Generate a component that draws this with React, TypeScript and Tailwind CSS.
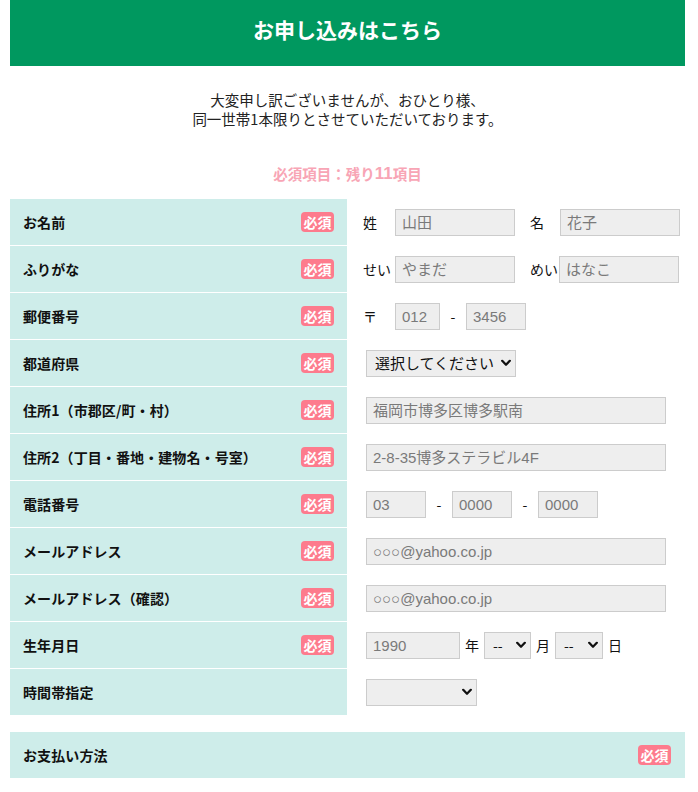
import React from "react";

const JP = '"Noto Sans CJK JP", sans-serif';
const LAT = '"Liberation Sans", "Noto Sans CJK JP", sans-serif';

function Badge() {
  return (
    <span className="inline-flex h-[20px] w-[33px] items-center justify-center rounded-[4px] bg-[#fd7b8d] text-[14px] font-bold leading-none text-white">
      必須
    </span>
  );
}

function Chevron() {
  return (
    <svg width="10" height="7" viewBox="0 0 10 7" className="pointer-events-none absolute right-[5px] top-1/2 -translate-y-1/2">
      <path d="M1.2 1.3 L5 5.2 L8.8 1.3" fill="none" stroke="#111" strokeWidth="2.3" strokeLinecap="round" strokeLinejoin="round" />
    </svg>
  );
}

function Sel({ w, text, pl = "pl-[8px]", size = "text-[15px]" }: { w: string; text: string; pl?: string; size?: string }) {
  return (
    <div className={`relative h-[27px] ${w}`}>
      <select
        className={`h-full w-full appearance-none rounded-none border border-[#cccccc] bg-[#eeeeee] ${pl} ${size} text-[#111] outline-none`}
        style={{ fontFamily: JP }}
        defaultValue=""
      >
        <option value="">{text}</option>
      </select>
      <Chevron />
    </div>
  );
}

function Inp({ w, ph }: { w: string; ph: string }) {
  return (
    <input
      className={`h-[27px] ${w} border border-[#cccccc] bg-[#eeeeee] px-[6px] text-[15px] text-[#333] outline-none placeholder:text-[#7a7a7a]`}
      style={{ fontFamily: LAT }}
      placeholder={ph}
    />
  );
}

function Row({ label, req = true, children }: { label: string; req?: boolean; children?: React.ReactNode }) {
  return (
    <div className="flex border-b border-white">
      <div className="flex h-[46px] w-[337px] items-center justify-between bg-[#ceedea] pl-[13px] pr-[13px]">
        <span className="text-[14px] font-bold tracking-[0.1px] text-[#111]">{label}</span>
        {req && <Badge />}
      </div>
      <div className="flex flex-1 items-center text-[14px] text-[#111]">{children}</div>
    </div>
  );
}

export default function App() {
  return (
    <div className="min-h-[792px] bg-white" style={{ fontFamily: JP }}>
      <div className="ml-[10px] w-[675px]">
        <div className="flex h-[66px] items-center justify-center bg-[#00985f] pb-[6px]">
          <h1 className="text-[21px] font-bold text-white">お申し込みはこちら</h1>
        </div>
        <div className="pt-[24px] text-center text-[14.5px] leading-[19px] text-[#222]">
          <p>大変申し訳ございませんが、おひとり様、</p>
          <p>同一世帯1本限りとさせていただいております。</p>
        </div>
        <div className="mt-[36px] flex h-[20px] items-center justify-center text-[14.5px] font-bold text-[#f8a5b5]">
          <span>必須項目：残り</span>
          <span className="text-[17px]" style={{ fontFamily: LAT }}>11</span>
          <span>項目</span>
        </div>
        <div className="mt-[15px]">
          <Row label="お名前">
            <div className="flex items-center pl-[16px]">
              <span className="w-[32px]">姓</span>
              <Inp w="w-[120px]" ph="山田" />
              <span className="ml-[15px] w-[30px]">名</span>
              <Inp w="w-[120px]" ph="花子" />
            </div>
          </Row>
          <Row label="ふりがな">
            <div className="flex items-center pl-[16px]">
              <span className="w-[32px]">せい</span>
              <Inp w="w-[120px]" ph="やまだ" />
              <span className="ml-[15px] w-[29px]">めい</span>
              <Inp w="w-[120px]" ph="はなこ" />
            </div>
          </Row>
          <Row label="郵便番号">
            <div className="flex items-center pl-[16px]">
              <span className="w-[32px]">〒</span>
              <Inp w="w-[45px]" ph="012" />
              <span className="w-[26px] text-center">-</span>
              <Inp w="w-[60px]" ph="3456" />
            </div>
          </Row>
          <Row label="都道府県">
            <div className="pl-[19px]">
              <Sel w="w-[150px]" text="選択してください" pl="pl-[8px]" size="text-[15px]" />
            </div>
          </Row>
          <Row label="住所1（市郡区/町・村）">
            <div className="pl-[19px]">
              <Inp w="w-[300px]" ph="福岡市博多区博多駅南" />
            </div>
          </Row>
          <Row label="住所2（丁目・番地・建物名・号室）">
            <div className="pl-[19px]">
              <Inp w="w-[300px]" ph="2-8-35博多ステラビル4F" />
            </div>
          </Row>
          <Row label="電話番号">
            <div className="flex items-center pl-[19px]">
              <Inp w="w-[60px]" ph="03" />
              <span className="w-[26px] text-center">-</span>
              <Inp w="w-[60px]" ph="0000" />
              <span className="w-[26px] text-center">-</span>
              <Inp w="w-[60px]" ph="0000" />
            </div>
          </Row>
          <Row label="メールアドレス">
            <div className="pl-[19px]">
              <Inp w="w-[300px]" ph="○○○@yahoo.co.jp" />
            </div>
          </Row>
          <Row label="メールアドレス（確認）">
            <div className="pl-[19px]">
              <Inp w="w-[300px]" ph="○○○@yahoo.co.jp" />
            </div>
          </Row>
          <Row label="生年月日">
            <div className="flex items-center pl-[19px]">
              <Inp w="w-[94px]" ph="1990" />
              <span className="px-[5px]">年</span>
              <Sel w="w-[47px]" text="--" pl="pl-[8px]" size="text-[14px]" />
              <span className="px-[5px]">月</span>
              <Sel w="w-[48px]" text="--" pl="pl-[8px]" size="text-[14px]" />
              <span className="px-[5px]">日</span>
            </div>
          </Row>
          <Row label="時間帯指定" req={false}>
            <div className="pl-[19px]">
              <Sel w="w-[111px]" text="" />
            </div>
          </Row>
        </div>
        <div className="mt-[16px] flex h-[46px] items-center justify-between bg-[#ceedea] pl-[13px] pr-[14px]">
          <span className="text-[14px] font-bold tracking-[0.1px] text-[#111]">お支払い方法</span>
          <Badge />
        </div>
      </div>
    </div>
  );
}
